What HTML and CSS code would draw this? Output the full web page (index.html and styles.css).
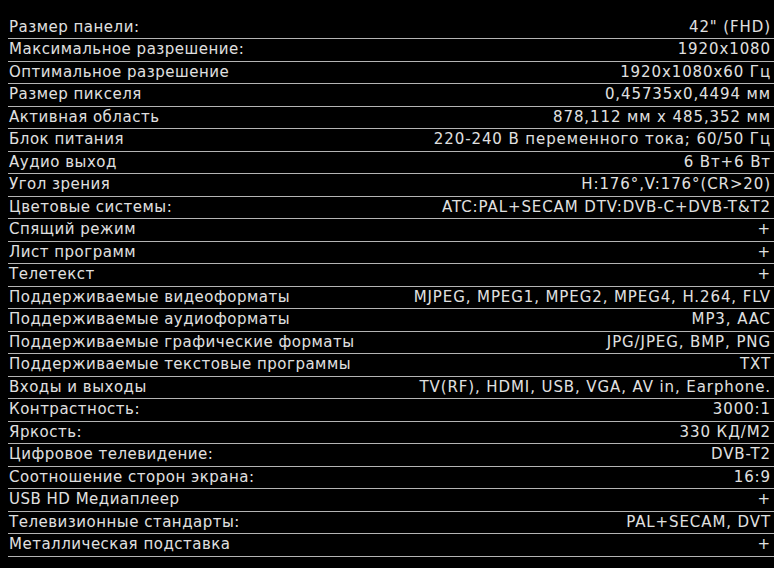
FILE: index.html
```html
<!DOCTYPE html>
<html lang="ru">
<head>
<meta charset="utf-8">
<link rel="stylesheet" href="styles.css">
</head>
<body>
<div class="specs">
  <div class="row"><span class="k">Размер панели:</span><span class="v">42" (FHD)</span></div>
  <div class="row"><span class="k">Максимальное разрешение:</span><span class="v">1920x1080</span></div>
  <div class="row"><span class="k">Оптимальное разрешение</span><span class="v">1920x1080x60 Гц</span></div>
  <div class="row"><span class="k">Размер пикселя</span><span class="v">0,45735x0,4494 мм</span></div>
  <div class="row"><span class="k">Активная область</span><span class="v">878,112 мм x 485,352 мм</span></div>
  <div class="row"><span class="k">Блок питания</span><span class="v">220-240 В переменного тока; 60/50 Гц</span></div>
  <div class="row"><span class="k">Аудио выход</span><span class="v">6 Вт+6 Вт</span></div>
  <div class="row"><span class="k">Угол зрения</span><span class="v">H:176°,V:176°(CR&gt;20)</span></div>
  <div class="row"><span class="k">Цветовые системы:</span><span class="v">ATC:PAL+SECAM DTV:DVB-C+DVB-T&amp;T2</span></div>
  <div class="row"><span class="k">Спящий режим</span><span class="v">+</span></div>
  <div class="row"><span class="k">Лист программ</span><span class="v">+</span></div>
  <div class="row"><span class="k">Телетекст</span><span class="v">+</span></div>
  <div class="row"><span class="k">Поддерживаемые видеоформаты</span><span class="v">MJPEG, MPEG1, MPEG2, MPEG4, H.264, FLV</span></div>
  <div class="row"><span class="k">Поддерживаемые аудиоформаты</span><span class="v">MP3, AAC</span></div>
  <div class="row"><span class="k">Поддерживаемые графические форматы</span><span class="v">JPG/JPEG, BMP, PNG</span></div>
  <div class="row"><span class="k">Поддерживаемые текстовые программы</span><span class="v">TXT</span></div>
  <div class="row"><span class="k">Входы и выходы</span><span class="v">TV(RF), HDMI, USB, VGA, AV in, Earphone.</span></div>
  <div class="row"><span class="k">Контрастность:</span><span class="v">3000:1</span></div>
  <div class="row"><span class="k">Яркость:</span><span class="v">330 КД/М2</span></div>
  <div class="row"><span class="k">Цифровое телевидение:</span><span class="v">DVB-T2</span></div>
  <div class="row"><span class="k">Соотношение сторон экрана:</span><span class="v">16:9</span></div>
  <div class="row"><span class="k">USB HD Медиаплеер</span><span class="v">+</span></div>
  <div class="row"><span class="k">Телевизионные стандарты:</span><span class="v">PAL+SECAM, DVT</span></div>
  <div class="row"><span class="k">Металлическая подставка</span><span class="v">+</span></div>
</div>
</body>
</html>
```
FILE: styles.css
```css
html, body {
  background: #000;
}
body {
  margin: 0;
  padding: 16.5px 0 0 8px;
  font-family: "DejaVu Sans", Verdana, sans-serif;
  font-size: 15px;
  color: #e0e0e0;
}
.specs {
  display: flex;
  flex-direction: column;
}
.row {
  display: flex;
  justify-content: space-between;
  line-height: 21.5px;
  height: 21.5px;
  border-bottom: 1px solid #b4b4b4;
  padding: 0 3px 0 1px;
  white-space: nowrap;
}
.k {
  letter-spacing: 0.5px;
}
.v {
  letter-spacing: 0.9px;
}
```
